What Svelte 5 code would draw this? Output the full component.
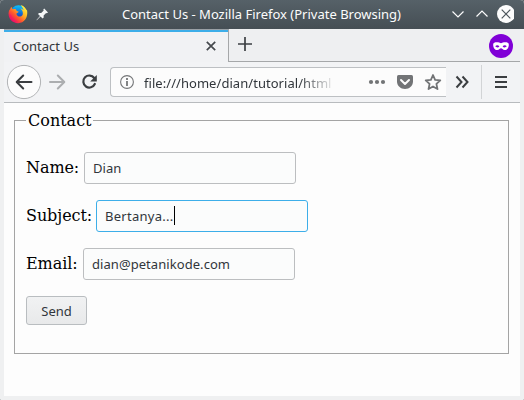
<script>
  const fields = [
    { label: 'Name:', value: 'Dian', labelWidth: 58 },
    { label: 'Subject:', value: 'Bertanya...', labelWidth: 70, focused: true },
    { label: 'Email:', value: 'dian@petanikode.com', labelWidth: 57 }
  ];
</script>

<div class="window">
  <header class="titlebar">
    <svg class="firefox" width="20" height="20" viewBox="0 0 20 20">
      <defs>
        <linearGradient id="flame" x1="0.85" y1="0.1" x2="0.15" y2="0.85">
          <stop offset="0" stop-color="#fff044" />
          <stop offset="0.35" stop-color="#ffb020" />
          <stop offset="0.65" stop-color="#ff5a2c" />
          <stop offset="1" stop-color="#ed0b68" />
        </linearGradient>
        <linearGradient id="globe" x1="0.5" y1="0" x2="0.4" y2="1">
          <stop offset="0" stop-color="#0bc5fb" />
          <stop offset="0.55" stop-color="#1264d1" />
          <stop offset="1" stop-color="#352494" />
        </linearGradient>
      </defs>
      <circle cx="10.5" cy="9" r="7.8" fill="url(#globe)" />
      <path d="M3.7 3.1C3.8 4.3 4.3 5 5 5.3C6.1 4.8 7.1 5 8 5.4C8.2 6.8 9.7 7.2 10.7 7.6C10.4 8.8 9.2 8.9 8.4 9.7C8.8 12.7 12.8 13.7 14.5 10.9C15.5 8.5 14.2 5.9 12.5 4.5C14.2 4.7 15 5.6 15.6 6.1C15 3.6 13.5 2.4 12.8 1C16.3 2.2 18.2 4.7 18.4 6.4L18.8 5.3C20.4 11 18 18.9 10.1 19.2C3.6 19.2-.2 13.7.7 8.2C1 6.4 1.7 5.5 2.4 5.1C2.2 4.3 2.8 3.5 3.7 3.1Z" fill="url(#flame)" />
      <path d="M1.1 10C2.1 15 6.4 18 10.8 17.3C7.1 17.1 4.1 14.6 3.2 11.2Z" fill="#f5156c" opacity=".6" />
    </svg>
    <svg class="pin" width="13" height="13" viewBox="0 0 13 13">
      <path d="M8.2.6L12 4.4L10.9 5.3L10.1 5L7.6 7.5L7.7 9.6L6.6 10.6L4.5 8.5L.8 12.2L.5 11.9L4 8L2 6L3 4.9L5.2 5L7.7 2.5L7.3 1.6Z" fill="#f4f6f7" />
    </svg>
    <h1>Contact Us - Mozilla Firefox (Private Browsing)</h1>
    <svg class="controls" width="64" height="20" viewBox="0 0 64 20">
      <path d="M2.5 7.5L8 13L13.5 7.5M26.5 12.5L32 7L37.5 12.5" fill="none" stroke="#fcfcfc" stroke-width="1.2" />
      <circle cx="56" cy="10" r="9" fill="#fcfcfc" />
      <path d="M51.7 5.7L60.3 14.3M60.3 5.7L51.7 14.3" stroke="#4d565c" stroke-width="1.2" />
    </svg>
  </header>

  <div class="browser">
    <div class="tabs">
      <div class="tab">
        <span>Contact Us</span>
        <svg width="12" height="12" viewBox="0 0 12 12"><path d="M1.8 1.8L10.2 10.2M10.2 1.8L1.8 10.2" stroke="#45494d" stroke-width="1.7" /></svg>
      </div>
      <div class="strip">
        <svg width="14" height="14" viewBox="0 0 14 14"><path d="M7 0V14M0 7H14" stroke="#3b3f43" stroke-width="1.7" /></svg>
        <svg width="24" height="24" viewBox="0 0 24 24">
          <circle cx="12" cy="12" r="12" fill="#8000d7" />
          <path fill-rule="evenodd" d="M4.2 10.2C4.3 8.3 7.1 7.9 9 8.3C10.7 8.7 11 9.2 12 9.2C13 9.2 13.3 8.7 15 8.3C16.9 7.9 19.7 8.3 19.8 10.2C20 13.7 18.2 16.1 15.7 16C13.7 15.9 13.2 14.3 12 14.3C10.8 14.3 10.3 15.9 8.3 16C5.8 16.1 4 13.7 4.2 10.2ZM6.2 12.3C7.4 13.7 9.3 13.7 10.4 12.5C9.4 10.9 7.3 10.9 6.2 12.3ZM13.6 12.5C14.7 13.7 16.6 13.7 17.8 12.3C16.7 10.9 14.6 10.9 13.6 12.5Z" fill="#fff" />
        </svg>
      </div>
    </div>

    <nav>
      <svg class="history" width="106" height="36" viewBox="0 0 106 36">
        <circle cx="20" cy="18" r="16.6" fill="#fcfcfc" stroke="#b1b3b5" />
        <path d="M27.5 18H13M19.2 11.5L12.7 18L19.2 24.5" fill="none" stroke="#3b3e41" stroke-width="2" stroke-linecap="round" stroke-linejoin="round" />
        <path d="M46 18H60M53.8 11.5L60.3 18L53.8 24.5" fill="none" stroke="#acaeb0" stroke-width="2" stroke-linecap="round" stroke-linejoin="round" />
        <path d="M90.2 14A6 6 0 1 0 90.8 20" fill="none" stroke="#3b3e41" stroke-width="2.2" stroke-linecap="round" />
        <path d="M92.8 11V17.4H86.2Z" fill="#3b3e41" />
      </svg>
      <div class="url">
        <svg width="14" height="14" viewBox="0 0 14 14"><circle cx="7" cy="7" r="6.4" fill="none" stroke="#747678" stroke-width="1.1" /><path d="M7 3V5M7 6V11" stroke="#747678" stroke-width="1.8" /></svg>
        <span class="address">file:///home/dian/tutorial/html</span>
        <svg class="actions" width="76" height="20" viewBox="0 0 76 20">
          <g fill="#727476"><circle cx="3" cy="10" r="2.1" /><circle cx="9" cy="10" r="2.1" /><circle cx="15" cy="10" r="2.1" /></g>
          <path d="M30.5 3H43.5Q45 3 45 4.5V9.5C45 13.8 41.5 17 37 17S29 13.8 29 9.5V4.5Q29 3 30.5 3Z" fill="#727476" />
          <path d="M33 8L37 12L41 8" fill="none" stroke="#fcfcfc" stroke-width="2" stroke-linecap="round" stroke-linejoin="round" />
          <path d="M65 3L67.1 7.8L72.3 8.3L68.4 11.9L69.5 17.1L65 14.4L60.5 17.1L61.6 11.9L57.7 8.3L62.9 7.8Z" fill="none" stroke="#727476" stroke-width="1.8" stroke-linejoin="round" />
        </svg>
      </div>
      <svg class="more" width="14" height="14" viewBox="0 0 14 14"><path d="M1.5 1.5L6.5 7L1.5 12.5M7.5 1.5L12.5 7L7.5 12.5" fill="none" stroke="#3b3e41" stroke-width="2" /></svg>
      <div class="separator"></div>
      <svg class="menu" width="12" height="12" viewBox="0 0 12 12"><path d="M0 1H12M0 6H12M0 11H12" stroke="#3b3e41" stroke-width="2" /></svg>
    </nav>

    <main>
      <section class="group">
        <h2>Contact</h2>
        {#each fields as field}
          <div class="row">
            <span class="label" style="width: {field.labelWidth}px">{field.label}</span>
            <div class="input" class:focused={field.focused}>
              <span>{field.value}</span>{#if field.focused}<i></i>{/if}
            </div>
          </div>
        {/each}
        <button>Send</button>
      </section>
    </main>
  </div>
</div>

<style>
  :global(body) { background: #5b6368; }
  * { box-sizing: border-box; }
  svg { display: block; flex: none; }
  .window {
    width: 524px; height: 400px; overflow: hidden; background: #eff0f1;
    border-radius: 4px 4px 1px 1px;
    font: 13px/18px "Noto Sans", "Open Sans", sans-serif; color: #31363b;
  }
  .titlebar {
    height: 29px; display: flex; align-items: center; padding-bottom: 1px;
    background: linear-gradient(#566168, #454e54); color: #fcfcfc;
  }
  .firefox { margin-left: 8px; }
  .pin { margin-left: 8px; }
  h1 { margin: 0 0 0 73px; width: 280px; font: inherit; white-space: nowrap; }
  .controls { margin-left: 48px; }
  .browser { margin: 0 4px; }
  .tabs { height: 33px; display: flex; }
  .tab {
    width: 225px; height: 33px; padding: 0 12px 0 9px; display: flex;
    align-items: center; justify-content: space-between; background: #f1f2f4;
    border-top: 1px solid #9aa0a5; border-right: 1px solid #a5a7a9; box-shadow: inset 0 2px #3daee9;
  }
  .tab svg { margin-right: -1px; }
  .strip {
    flex: 1; display: flex; align-items: center; justify-content: space-between;
    padding: 0 7px 0 9px; border-bottom: 1px solid #a5a7a9; background: #eeeff1;
  }
  .strip svg:first-child { margin-bottom: 2px; }
  .strip svg:last-child { margin-top: 1px; }
  nav { height: 41px; display: flex; align-items: center; background: #f2f3f5; border-bottom: 1px solid #b8bbbe; }
  .history { flex: none; }
  .url {
    width: 336px; height: 30px; display: flex; align-items: center; padding-left: 9px;
    border: 1px solid #bdc0c3; border-right: 0; border-radius: 4px 0 0 4px; background: #fcfcfc;
  }
  .address {
    width: 190px; margin: 2px 0 0 10px; overflow: hidden; white-space: nowrap; letter-spacing: .05px;
    mask-image: linear-gradient(90deg, #000 155px, transparent 192px);
  }
  .actions { margin-left: 34px; }
  .more { margin-left: 9px; }
  .separator { width: 1px; height: 34px; margin-left: 12px; background: #d2d4d6; }
  .menu { margin-left: 13px; }
  main { height: 293px; padding: 17px 11px 0 10px; background: #fdfdfd; }
  .group { height: 234px; border: 1px solid #a4a4a4; padding-left: 11px; }
  h2 {
    width: 67px; height: 20px; margin: -10px 0 21px; padding-left: 2px; background: #fdfdfd;
    font: 16px/20px "DejaVu Serif", serif; color: #000;
  }
  .row { display: flex; align-items: center; height: 32px; margin-bottom: 16px; }
  .label { font: 16px/20px "DejaVu Serif", serif; color: #000; white-space: nowrap; letter-spacing: -.08px; }
  .input {
    width: 212px; height: 32px; border: 1px solid #bcbec0; border-radius: 3px; padding: 0 0 1px 8px;
    background: #fbfcfc; display: flex; align-items: center; letter-spacing: .06px;
  }
  .focused { border-color: #3daee9; letter-spacing: .27px; }
  .input i { width: 1px; height: 19px; background: #000; }
  button {
    display: block; width: 61px; height: 29px; padding: 1px 0 0; font: inherit; color: inherit;
    border: 1px solid #b9bdc0; border-radius: 3px; background: linear-gradient(#f1f2f3, #e8e9ea);
  }
</style>
